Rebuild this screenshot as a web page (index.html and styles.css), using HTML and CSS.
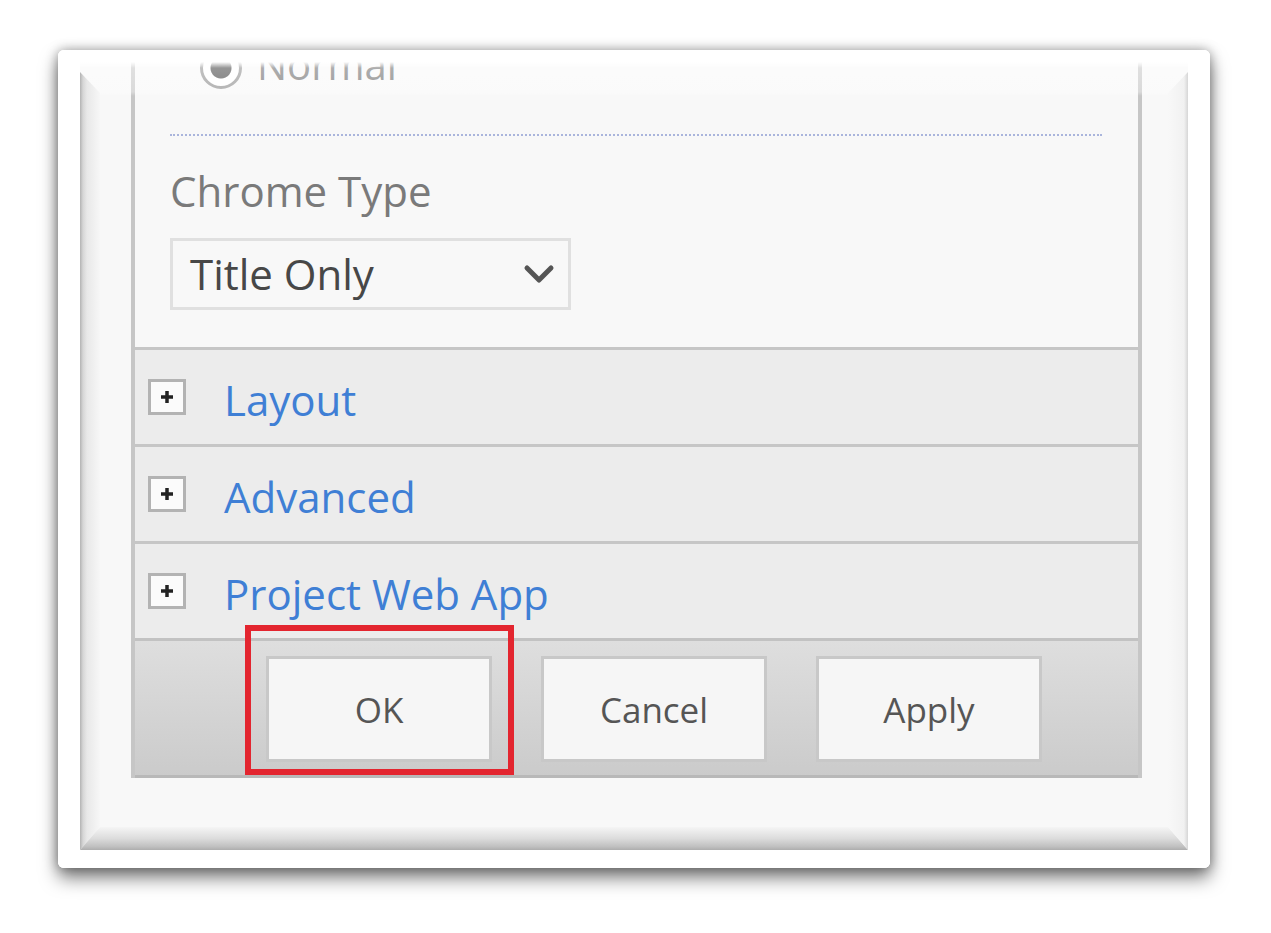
FILE: index.html
```html
<!DOCTYPE html>
<html lang="en">
<head>
  <meta charset="UTF-8" />
  <meta name="viewport" content="width=device-width, initial-scale=1.0" />
  <title>Web Part Properties</title>
  <link rel="stylesheet" href="styles.css">
</head>
<body>
  <div class="frame">
    <div class="shot">
      <div class="pane">
        <div class="props">
          <label class="radio"><span class="radio-dot"></span><span class="radio-text">Normal</span></label>
          <div class="divider"></div>
          <div class="field-label">Chrome Type</div>
          <div class="select">
            <span>Title Only</span>
            <svg class="chevron" width="32" height="22" viewBox="0 0 32 22">
              <polyline points="4,5 16,17 28,5" fill="none" stroke="#555" stroke-width="5" stroke-linejoin="round" stroke-linecap="round" />
            </svg>
          </div>
        </div>

        <div class="section">
          <span class="expander"><svg width="16" height="16" viewBox="0 0 16 16"><path d="M8 2v12M2 8h12" stroke="#222" stroke-width="3.5" /></svg></span>
          <a class="section-title">Layout</a>
        </div>
        <div class="section">
          <span class="expander"><svg width="16" height="16" viewBox="0 0 16 16"><path d="M8 2v12M2 8h12" stroke="#222" stroke-width="3.5" /></svg></span>
          <a class="section-title">Advanced</a>
        </div>
        <div class="section">
          <span class="expander"><svg width="16" height="16" viewBox="0 0 16 16"><path d="M8 2v12M2 8h12" stroke="#222" stroke-width="3.5" /></svg></span>
          <a class="section-title">Project Web App</a>
        </div>

        <div class="toolbar">
          <div class="btn-wrap">
            <button class="btn">OK</button>
            <span class="callout"></span>
          </div>
          <button class="btn">Cancel</button>
          <button class="btn">Apply</button>
        </div>
      </div>

      <!-- picture frame effect over the screenshot -->
      <div class="top-fade"></div>
      <svg class="bevel" width="1152" height="818" viewBox="0 0 1152 818">
        <defs>
          <linearGradient id="gl" x1="0" y1="0" x2="1" y2="0">
            <stop offset="0" stop-color="#b3b3b3" />
            <stop offset="0.15" stop-color="#d6d6d6" />
            <stop offset="0.35" stop-color="#e8e8e8" />
            <stop offset="1" stop-color="#f7f7f7" />
          </linearGradient>
          <linearGradient id="gb" x1="0" y1="0" x2="0" y2="1">
            <stop offset="0" stop-color="#f5f5f5" />
            <stop offset="0.5" stop-color="#dcdcdc" />
            <stop offset="0.85" stop-color="#c0c0c0" />
            <stop offset="1" stop-color="#adadad" />
          </linearGradient>
          <linearGradient id="gr" x1="0" y1="0" x2="1" y2="0">
            <stop offset="0" stop-color="#f8f8f8" />
            <stop offset="0.8" stop-color="#f1f1f1" />
            <stop offset="1" stop-color="#d6d6d6" />
          </linearGradient>
        </defs>
        <rect x="0" y="0" width="22" height="818" fill="#fff" />
        <rect x="1130" y="0" width="22" height="818" fill="#fff" />
        <rect x="0" y="800" width="1152" height="18" fill="#fff" />
        <polygon points="22,22 42,43 42,777 22,800" fill="url(#gl)" />
        <polygon points="22,800 42,777 1110,777 1130,800" fill="url(#gb)" />
        <polygon points="1130,22 1110,43 1110,777 1130,800" fill="url(#gr)" />
      </svg>
    </div>
  </div>
</body>
</html>
```

FILE: styles.css
```css
:root {
  --panel: #f8f8f8;
  --row: #ececec;
  --line: #c6c6c6;
  --link: #3f7fd5;
  --label: #7a7a7a;
  --text: #474747;
  --red: #e3252f;
}

body {
  margin: 0;
  background: #fff;
  font-family: 'Open Sans', 'Noto Sans', sans-serif;
}

.frame {
  padding: 50px 0 60px 58px;
}

.shot {
  position: relative;
  box-sizing: border-box;
  width: 1152px;
  height: 818px;
  padding-left: 73px;
  background: var(--panel);
  border-radius: 6px;
  box-shadow: 0 10px 18px rgba(0, 0, 0, 0.5), 0 0 12px rgba(0, 0, 0, 0.35);
  overflow: hidden;
}

.pane {
  width: 1011px;
  box-sizing: border-box;
  border-left: 4px solid var(--line);
  border-right: 4px solid var(--line);
}

.props {
  background: var(--panel);
  padding: 0 36px 37px 35px;
}

.radio {
  display: flex;
  align-items: center;
  height: 42px;
  margin-top: -3px;
  margin-left: 30px;
  gap: 15px;
  font-size: 40px;
  color: #6a6a6a;
}

.radio-text {
  line-height: 42px;
  margin-top: -6px;
}

.radio-dot {
  width: 36px;
  height: 36px;
  border: 3px solid #8e8e8e;
  border-radius: 50%;
  background: radial-gradient(circle, #3f3f3f 0, #3f3f3f 10px, #fff 11px);
}

.divider {
  margin-top: 45px;
  border-top: 2px dotted #aab5dc;
}

.field-label {
  margin-top: 30px;
  font-size: 42px;
  line-height: 50px;
  color: var(--label);
}

.select {
  margin-top: 22px;
  width: 401px;
  height: 72px;
  box-sizing: border-box;
  border: 3px solid #e0e0e0;
  padding: 0 13px 0 17px;
  display: flex;
  align-items: center;
  justify-content: space-between;
  font-size: 42px;
  line-height: 50px;
  color: var(--text);
}

.section {
  height: 94px;
  border-top: 3px solid var(--line);
  background: var(--row);
  display: flex;
  align-items: center;
  padding-left: 13px;
  gap: 38px;
}

.expander {
  width: 32px;
  height: 30px;
  border: 3px solid #b3b3b3;
  background: #fbfbfb;
  display: flex;
  align-items: center;
  justify-content: center;
}

.section-title {
  font-size: 42px;
  line-height: 50px;
  color: var(--link);
  margin-top: 6px;
}

.toolbar {
  height: 119px;
  border-top: 3px solid #c2c2c2;
  border-bottom: 3px solid #b8b8b8;
  background: linear-gradient(#dedede, #cbcbcb);
  display: flex;
  align-items: flex-start;
  padding: 15px 0 0 131px;
  gap: 49px;
}

.btn-wrap {
  position: relative;
}

.btn {
  display: block;
  width: 226px;
  height: 106px;
  border: 3px solid #c8c8c8;
  background: #f6f6f6;
  font-family: 'Open Sans', 'Noto Sans', sans-serif;
  font-size: 35px;
  color: #555;
  padding: 0;
}

.callout {
  position: absolute;
  top: -31px;
  left: -21px;
  right: -22px;
  bottom: -13px;
  border: 6px solid var(--red);
}

.top-fade {
  position: absolute;
  top: 0;
  left: 0;
  right: 0;
  height: 46px;
  background: linear-gradient(#fff, #fff 12px, rgba(255, 255, 255, 0.45) 18px, rgba(255, 255, 255, 0.35) 42px, rgba(255, 255, 255, 0) 46px);
}

.bevel {
  position: absolute;
  top: 0;
  left: 0;
  pointer-events: none;
}
```
